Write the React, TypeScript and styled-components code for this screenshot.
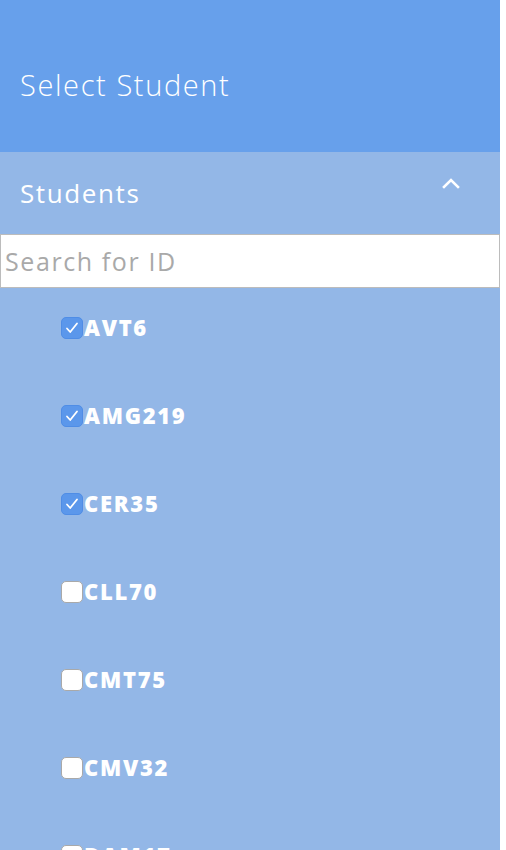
import React, { useState } from "react";
import styled, { createGlobalStyle } from "styled-components";

const Global = createGlobalStyle`
  html, body { margin: 0; padding: 0; background: #ffffff; }
  body { font-family: "Open Sans", "Liberation Sans", sans-serif; }
  * { box-sizing: border-box; }
`;

const Sidebar = styled.div`
  width: 500px;
  min-height: 850px;
  background: #93b7e7;
  display: flex;
  flex-direction: column;
`;

const Header = styled.header`
  height: 152px;
  background: #67a0eb;
  display: flex;
  align-items: center;
  padding: 0 20px;
`;

const Title = styled.h1`
  margin: 16px 0 0;
  font-family: "Open Sans", sans-serif;
  font-weight: 300;
  font-size: 29px;
  color: #ffffff;
  letter-spacing: 1.6px;
`;

const SectionHead = styled.div`
  height: 82px;
  display: flex;
  align-items: center;
  justify-content: space-between;
  padding: 0 40px 0 20px;
`;

const SectionTitle = styled.h2`
  margin: 0;
  font-family: "Open Sans", sans-serif;
  font-weight: 400;
  font-size: 26px;
  color: #ffffff;
  letter-spacing: 1.6px;
`;

const Chevron = styled.svg`
  width: 18px;
  height: 12px;
  margin-top: -20px;
`;

const Search = styled.input`
  display: block;
  width: 500px;
  height: 54px;
  margin: 0;
  border: 1px solid #bcbcbc;
  padding: 0 4px;
  font-family: "Open Sans", sans-serif;
  font-size: 25px;
  letter-spacing: 1.6px;
  color: #333;
  background: #ffffff;
  outline: none;
  &::placeholder { color: #a9a9a9; }
`;

const List = styled.ul`
  list-style: none;
  margin: 0;
  padding: 29px 0 0 61px;
  display: flex;
  flex-direction: column;
  gap: 66px;
`;

const Row = styled.li`
  display: flex;
  align-items: center;
  height: 22px;
  cursor: pointer;
`;

const Box = styled.span<{ $checked: boolean }>`
  width: 22px;
  height: 22px;
  flex: none;
  border-radius: 5px;
  display: flex;
  align-items: center;
  justify-content: center;
  background: ${(p) => (p.$checked ? "#5b97eb" : "#ffffff")};
  border: 1px solid ${(p) => (p.$checked ? "#4f8de6" : "#a9a9a9")};
`;

const Label = styled.span`
  font-family: "Open Sans", sans-serif;
  font-weight: 800;
  font-size: 22px;
  letter-spacing: 1.7px;
  color: #ffffff;
  margin-left: 1px;
  margin-top: -2px;
`;

const students = [
  { id: "AVT6", checked: true },
  { id: "AMG219", checked: true },
  { id: "CER35", checked: true },
  { id: "CLL70", checked: false },
  { id: "CMT75", checked: false },
  { id: "CMV32", checked: false },
  { id: "DAM17", checked: false },
];

export default function App() {
  const [items, setItems] = useState(students);
  const toggle = (id: string) =>
    setItems((list) => list.map((s) => (s.id === id ? { ...s, checked: !s.checked } : s)));
  return (
    <>
      <Global />
      <Sidebar>
        <Header>
          <Title>Select Student</Title>
        </Header>
        <SectionHead>
          <SectionTitle>Students</SectionTitle>
          <Chevron viewBox="0 0 18 12">
            <path d="M2 10 L9 3 L16 10" fill="none" stroke="#ffffff" strokeWidth="2.6" strokeLinecap="square" />
          </Chevron>
        </SectionHead>
        <Search placeholder="Search for ID" />
        <List>
          {items.map((s) => (
            <Row key={s.id} onClick={() => toggle(s.id)}>
              <Box $checked={s.checked}>
                {s.checked && (
                  <svg width="14" height="12" viewBox="0 0 14 12">
                    <path d="M2 6.5 L5.2 10 L12 1.5" fill="none" stroke="#ffffff" strokeWidth="1.8" strokeLinecap="round" strokeLinejoin="round" />
                  </svg>
                )}
              </Box>
              <Label>{s.id}</Label>
            </Row>
          ))}
        </List>
      </Sidebar>
    </>
  );
}
